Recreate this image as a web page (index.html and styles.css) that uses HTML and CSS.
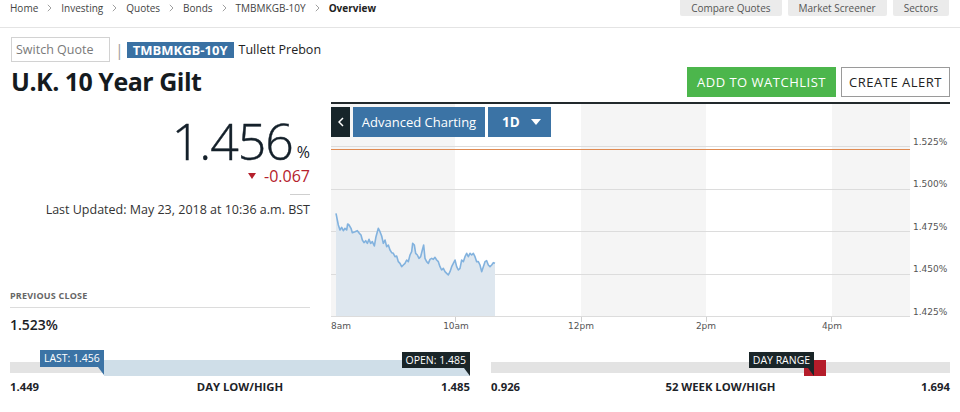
FILE: index.html
```html
<!DOCTYPE html>
<html>
<head>
<meta charset="utf-8">
<link rel="stylesheet" href="styles.css">
</head>
<body>
<div class="page">
  <header class="topbar">
    <nav class="crumbs">
      <span>Home</span>
      <svg class="chev" width="5" height="8" viewBox="0 0 5 8"><polyline points="0.8,0.8 4,4 0.8,7.2"/></svg>
      <span>Investing</span>
      <svg class="chev" width="5" height="8" viewBox="0 0 5 8"><polyline points="0.8,0.8 4,4 0.8,7.2"/></svg>
      <span>Quotes</span>
      <svg class="chev" width="5" height="8" viewBox="0 0 5 8"><polyline points="0.8,0.8 4,4 0.8,7.2"/></svg>
      <span>Bonds</span>
      <svg class="chev" width="5" height="8" viewBox="0 0 5 8"><polyline points="0.8,0.8 4,4 0.8,7.2"/></svg>
      <span>TMBMKGB-10Y</span>
      <svg class="chev" width="5" height="8" viewBox="0 0 5 8"><polyline points="0.8,0.8 4,4 0.8,7.2"/></svg>
      <span class="current">Overview</span>
    </nav>
    <div class="tools">
      <span class="tool">Compare Quotes</span>
      <span class="tool">Market Screener</span>
      <span class="tool">Sectors</span>
    </div>
  </header>

  <div class="quote-row">
    <input class="switch" type="text" placeholder="Switch Quote">
    <span class="pipe">|</span>
    <span class="ticker">TMBMKGB-10Y</span>
    <span class="source">Tullett Prebon</span>
  </div>

  <div class="title-row">
    <h1 class="title">U.K. 10 Year Gilt</h1>
    <div class="actions">
      <button class="btn-watch">ADD TO WATCHLIST</button>
      <button class="btn-alert">CREATE ALERT</button>
    </div>
  </div>

  <main class="main">
    <section class="summary">
      <div class="price">1.456<span class="pct">%</span></div>
      <div class="change">
        <svg width="8" height="6" viewBox="0 0 8 6"><polygon points="0,0 8,0 4,6" fill="#b5202c"/></svg>
        <span>-0.067</span>
      </div>
      <div class="rule"></div>
      <div class="updated">Last Updated: May 23, 2018 at 10:36 a.m. BST</div>
      <div class="prev">
        <div class="prev-label">PREVIOUS CLOSE</div>
        <div class="prev-value">1.523%</div>
      </div>
    </section>

    <section class="chart">
      <svg class="plot" width="619" height="230" viewBox="0 0 619 230">
        <rect x="0" y="0" width="124" height="213" fill="#f5f5f5"/>
        <rect x="250" y="0" width="125" height="213" fill="#f5f5f5"/>
        <rect x="501" y="0" width="78" height="213" fill="#f5f5f5"/>
        <g stroke="#dcdcdc" stroke-width="1">
          <line x1="0" y1="42.5" x2="579" y2="42.5"/>
          <line x1="0" y1="85.5" x2="579" y2="85.5"/>
          <line x1="0" y1="127.5" x2="579" y2="127.5"/>
          <line x1="0" y1="170.5" x2="579" y2="170.5"/>
        </g>
        <line x1="0" y1="45.5" x2="579" y2="45.5" stroke="#e08b52" stroke-width="1"/>
        <g transform="translate(-6 96) scale(0.33333)">
          <path fill="#dee7ef" d="M33,40 L40,75 L45,90 L50,82 L55,92 L60,85 L65,90 L68,72 L72,75 L78,85 L82,98 L90,95 L97,92 L103,100 L108,105 L112,120 L117,128 L122,122 L127,130 L132,118 L137,130 L142,125 L148,138 L153,110 L160,85 L165,95 L170,108 L175,130 L180,120 L185,140 L190,135 L195,150 L200,158 L205,160 L210,170 L215,168 L220,185 L225,190 L230,200 L235,195 L240,190 L245,180 L250,185 L255,165 L260,155 L263,130 L268,135 L272,160 L277,165 L282,175 L287,170 L292,150 L296,135 L300,175 L305,185 L310,190 L315,178 L320,175 L325,178 L330,172 L335,180 L340,185 L345,200 L350,210 L355,205 L360,215 L365,220 L370,225 L375,215 L380,200 L385,190 L390,180 L395,200 L400,210 L405,205 L410,180 L415,185 L420,170 L425,160 L430,170 L435,160 L440,165 L445,160 L450,170 L455,185 L460,185 L465,195 L470,215 L475,200 L480,185 L485,182 L490,195 L495,200 L500,195 L505,188 L510,190 L510,350 L33,350 Z"/>
          <path fill="none" stroke="#82b2de" stroke-width="1.6" vector-effect="non-scaling-stroke" stroke-linejoin="round" d="M33,40 L40,75 L45,90 L50,82 L55,92 L60,85 L65,90 L68,72 L72,75 L78,85 L82,98 L90,95 L97,92 L103,100 L108,105 L112,120 L117,128 L122,122 L127,130 L132,118 L137,130 L142,125 L148,138 L153,110 L160,85 L165,95 L170,108 L175,130 L180,120 L185,140 L190,135 L195,150 L200,158 L205,160 L210,170 L215,168 L220,185 L225,190 L230,200 L235,195 L240,190 L245,180 L250,185 L255,165 L260,155 L263,130 L268,135 L272,160 L277,165 L282,175 L287,170 L292,150 L296,135 L300,175 L305,185 L310,190 L315,178 L320,175 L325,178 L330,172 L335,180 L340,185 L345,200 L350,210 L355,205 L360,215 L365,220 L370,225 L375,215 L380,200 L385,190 L390,180 L395,200 L400,210 L405,205 L410,180 L415,185 L420,170 L425,160 L430,170 L435,160 L440,165 L445,160 L450,170 L455,185 L460,185 L465,195 L470,215 L475,200 L480,185 L485,182 L490,195 L495,200 L500,195 L505,188 L510,190"/>
        </g>
        <line x1="0" y1="212.5" x2="579" y2="212.5" stroke="#dcdcdc" stroke-width="1"/>
        <g stroke="#cfcfcf" stroke-width="1">
          <line x1="124.5" y1="213" x2="124.5" y2="218"/>
          <line x1="250.5" y1="213" x2="250.5" y2="218"/>
          <line x1="375.5" y1="213" x2="375.5" y2="218"/>
          <line x1="500.5" y1="213" x2="500.5" y2="218"/>
        </g>
        <g class="axis">
          <text x="582" y="41">1.525%</text>
          <text x="582" y="83">1.500%</text>
          <text x="582" y="126">1.475%</text>
          <text x="582" y="168">1.450%</text>
          <text x="582" y="211">1.425%</text>
          <text x="0" y="225">8am</text>
          <text x="125" y="225" text-anchor="middle">10am</text>
          <text x="250" y="225" text-anchor="middle">12pm</text>
          <text x="375" y="225" text-anchor="middle">2pm</text>
          <text x="501" y="225" text-anchor="middle">4pm</text>
        </g>
      </svg>
      <div class="chart-tools">
        <span class="back"><svg width="6" height="10" viewBox="0 0 6 10"><polyline points="5,1 1,5 5,9" fill="none" stroke="#fff" stroke-width="1.5"/></svg></span>
        <span class="adv">Advanced Charting</span>
        <span class="period">1D <svg width="10" height="6" viewBox="0 0 10 6"><polygon points="0,0 10,0 5,6" fill="#fff"/></svg></span>
      </div>
    </section>
  </main>

  <section class="ranges">
    <div class="range">
      <div class="track">
        <span class="fill" style="left:20.4%;width:79.6%"></span>
        <span class="flag flag-blue" style="right:79.6%">LAST: 1.456</span>
        <span class="flag flag-dark flag-low" style="right:0%">OPEN: 1.485</span>
      </div>
      <div class="labels">
        <span class="lo">1.449</span>
        <span class="mid">DAY LOW/HIGH</span>
        <span class="hi">1.485</span>
      </div>
    </div>
    <div class="range">
      <div class="track">
        <span class="marker" style="left:68.2%;width:4.8%"></span>
        <span class="flag flag-dark flag-low" style="right:29.6%">DAY RANGE</span>
      </div>
      <div class="labels">
        <span class="lo">0.926</span>
        <span class="mid">52 WEEK LOW/HIGH</span>
        <span class="hi">1.694</span>
      </div>
    </div>
  </section>
</div>
</body>
</html>
```

FILE: styles.css
```css
* { box-sizing: border-box; margin: 0; padding: 0; }

body {
  font-family: "Open Sans", "Liberation Sans", sans-serif;
  color: #222;
  background: #fff;
  width: 960px;
  height: 412px;
  overflow: hidden;
}

.topbar {
  display: flex;
  justify-content: space-between;
  height: 28px;
  border-bottom: 1px solid #e4e4e4;
  padding: 0 11px 0 10px;
}

.crumbs {
  display: flex;
  align-items: center;
  gap: 9px;
  height: 16px;
  font-size: 10px;
  line-height: 16px;
  color: #444;
}

.chev polyline { fill: none; stroke: #a0a0a0; stroke-width: 1; }

.crumbs .current { font-weight: 700; color: #222; }

.tools { display: flex; gap: 6px; }

.tool {
  height: 16px;
  line-height: 16px;
  padding: 0 11px;
  background: #ebebeb;
  color: #555;
  font-size: 10px;
  border-radius: 0 0 2px 2px;
}

.quote-row {
  display: flex;
  align-items: center;
  height: 25px;
  margin-top: 9px;
  padding-left: 11px;
}

.switch {
  width: 99px;
  height: 25px;
  border: 1px solid #d2d2d2;
  padding: 0 4px;
  font-family: "Open Sans", sans-serif;
  font-size: 12.5px;
  color: #777;
  outline: none;
}

.switch::placeholder { color: #7a7a7a; }

.pipe { margin-left: 5px; color: #a0a0a0; font-size: 16px; line-height: 20px; }

.ticker {
  margin-left: 3px;
  background: #3a71a3;
  color: #fff;
  font-size: 13px;
  font-weight: 700;
  line-height: 16px;
  padding: 0 6px;
}

.source { margin-left: 5px; font-size: 12.5px; color: #222; }

.title-row {
  display: flex;
  justify-content: space-between;
  align-items: flex-end;
  height: 34px;
  margin-top: 1px;
  padding: 0 10px 0 11px;
}

.title {
  font-size: 25px;
  font-weight: 700;
  line-height: 32px;
  letter-spacing: -0.5px;
  color: #151b1f;
}

.actions { display: flex; gap: 5px; }

.btn-watch, .btn-alert {
  height: 30px;
  font-family: "Open Sans", sans-serif;
  font-size: 13px;
  letter-spacing: 0.5px;
  cursor: pointer;
}

.btn-watch { width: 149px; background: #4cb64c; color: #fff; border: 0; }

.btn-alert { width: 109px; background: #fff; color: #222; border: 1px solid #9a9a9a; }

.main {
  display: grid;
  grid-template-columns: 300px 619px;
  column-gap: 21px;
  align-items: start;
  margin-top: 5px;
  padding: 0 10px;
}

.summary {
  display: flex;
  flex-direction: column;
  align-items: flex-end;
  padding-top: 16px;
}

.price {
  font-size: 50px;
  font-weight: 300;
  line-height: 46px;
  height: 46px;
  color: #14202a;
  letter-spacing: -1px;
  -webkit-text-stroke: 0.4px #14202a;
}

.pct {
  font-size: 16px;
  font-weight: 400;
  line-height: 1;
  margin-left: 4px;
  letter-spacing: 0;
  vertical-align: 2px;
  -webkit-text-stroke: 0;
}

.change {
  display: flex;
  align-items: center;
  gap: 8px;
  margin-top: 3px;
  font-size: 16px;
  line-height: 18px;
  color: #b5202c;
}

.rule { width: 20px; height: 1px; background: #cfcfcf; margin-top: 9px; }

.updated { font-size: 12.5px; line-height: 18px; margin-top: 5.5px; color: #333; }

.prev { align-self: stretch; margin-top: 71.5px; }

.prev-label {
  font-size: 9px;
  font-weight: 700;
  color: #666;
  line-height: 12px;
  letter-spacing: 0.2px;
  padding-bottom: 5px;
  border-bottom: 1px solid #dcdcdc;
}

.prev-value {
  font-size: 14px;
  font-weight: 600;
  line-height: 18px;
  margin-top: 7.5px;
  color: #1a2026;
}

.chart {
  position: relative;
  height: 232px;
  border-top: 2px solid #22292c;
}

.plot { display: block; }

.axis text {
  font-family: "DejaVu Sans", sans-serif;
  font-size: 9px;
  fill: #555;
}

.chart-tools {
  position: absolute;
  top: 3px;
  left: 0;
  display: flex;
  gap: 3px;
}

.back {
  width: 19px;
  height: 30px;
  background: #17252a;
  display: flex;
  align-items: center;
  justify-content: center;
}

.adv {
  width: 132px;
  height: 30px;
  line-height: 30px;
  background: #3b73a5;
  color: #fff;
  font-size: 13px;
  text-align: center;
}

.period {
  width: 63px;
  height: 30px;
  background: #3b73a5;
  color: #fff;
  font-size: 13.5px;
  font-weight: 700;
  display: flex;
  align-items: center;
  gap: 11px;
  padding-left: 14px;
}

.ranges {
  display: grid;
  grid-template-columns: 460px 459px;
  column-gap: 21px;
  padding: 0 10px;
  margin-top: 26px;
}

.track { position: relative; height: 16px; }

.track::before {
  content: "";
  position: absolute;
  left: 0;
  right: 0;
  top: 2px;
  height: 11px;
  background: #e3e3e3;
}

.fill { position: absolute; top: 0; height: 16px; background: #cfdee8; }

.marker { position: absolute; top: 0; height: 16px; background: #b51c2a; }

.flag {
  position: absolute;
  top: -10px;
  height: 17px;
  line-height: 17px;
  padding: 0 4px;
  font-size: 10.5px;
  color: #fff;
  white-space: nowrap;
}

.flag::after {
  content: "";
  position: absolute;
  right: 0;
  top: 100%;
  border-left: 6px solid transparent;
  border-top: 8px solid;
}

.flag-blue { background: #3b73a5; }
.flag-blue::after { border-top-color: #3b73a5; }

.flag-dark { background: #1a2528; }
.flag-dark::after { border-top-color: #1a2528; }

.flag-low { top: -8px; height: 16px; line-height: 16px; }

.labels {
  display: grid;
  grid-template-columns: 1fr auto 1fr;
  margin-top: 3px;
  font-size: 11.3px;
  font-weight: 700;
  line-height: 16px;
  color: #1d2328;
}

.labels .hi { text-align: right; }
```
